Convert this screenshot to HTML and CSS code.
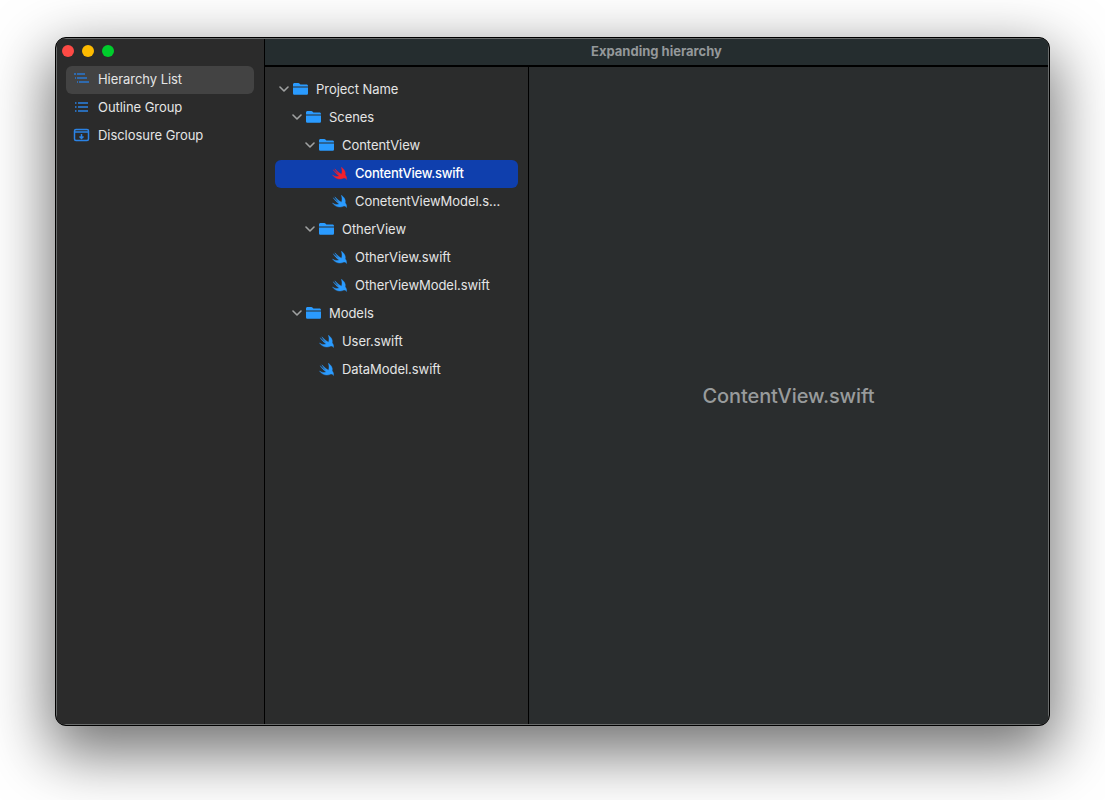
FILE: index.html
```html
<!DOCTYPE html>
<html>
<head lang="en">
    <meta charset="UTF-8">
    <title>Expanding hierarchy</title>
    <link rel="stylesheet" href="styles.css">
</head>
<body>
<svg class="defs" width="0" height="0">
    <symbol id="folder" viewBox="0 0 15 12">
        <path d="M1.6 0h3.6c.7 0 1 .2 1.5.7l.7.8h6c1 0 1.6.6 1.6 1.6v.5H0V1.6C0 .6.6 0 1.6 0z"/>
        <path d="M0 4.4h15v5.8c0 1-.6 1.6-1.6 1.6H1.600C.6 11.800 0 11.200 0 10.200z"/>
    </symbol>
    <symbol id="swift" viewBox="0 0 15 13">
        <path d="M9.4.2c3 2 4.500 5 3.800 7.600 1.200 1.500 1.600 3.200 1.300 4.700-.9-1.400-2.300-1.600-3.300-1.200-3 1.400-7.700 1-10.700-3.300 2.500 1.600 5 1.900 6.800 1.100C5 7.700 2.800 5.200 1.200 2.800c2 2 4.200 3.600 5.800 4.600C5.400 5.800 3.900 3.700 2.900 1.800c2 2.200 4.600 4.400 6.600 5.500.7-2 .7-4.500-.1-7.100z"/>
    </symbol>
    <symbol id="chevron" viewBox="0 0 10 6">
        <path d="M1 1l4 4 4-4" fill="none" stroke="#a0a2a2" stroke-width="1.6" stroke-linecap="round" stroke-linejoin="round"/>
    </symbol>
</svg>
<div class="window">
    <aside class="sidebar">
        <div class="lights">
            <span class="light red"></span>
            <span class="light yellow"></span>
            <span class="light green"></span>
        </div>
        <ul class="nav">
            <li class="nav-item active">
                <svg class="nav-icon" viewBox="0 0 18 14">
                    <path d="M1 2h2M4 2h8M2 6h1M4 6h10M4 10h1M6 10h10"/>
                </svg>
                <span class="label">Hierarchy List</span>
            </li>
            <li class="nav-item">
                <svg class="nav-icon bright" viewBox="0 0 18 14">
                    <path d="M2 3h1.500M5 3h10M2 7h1.500M5 7h10M2 11h1.500M5 11h10"/>
                </svg>
                <span class="label">Outline Group</span>
            </li>
            <li class="nav-item">
                <svg class="nav-icon bright" viewBox="0 0 18 14">
                    <rect x="1.500" y="1.500" width="14" height="11" rx="1.500"/>
                    <path d="M1.500 4h14M8.500 6v4.500M6.500 8.500l2 2 2-2"/>
                </svg>
                <span class="label">Disclosure Group</span>
            </li>
        </ul>
    </aside>
    <div class="main">
        <header class="titlebar">Expanding hierarchy</header>
        <div class="split">
            <ul class="tree">
                <li class="row lv0"><svg class="chevron"><use href="#chevron"/></svg><svg class="folder"><use href="#folder"/></svg><span class="name">Project Name</span></li>
                <li class="row lv1"><svg class="chevron"><use href="#chevron"/></svg><svg class="folder"><use href="#folder"/></svg><span class="name">Scenes</span></li>
                <li class="row lv2"><svg class="chevron"><use href="#chevron"/></svg><svg class="folder"><use href="#folder"/></svg><span class="name">ContentView</span></li>
                <li class="row lv3 selected"><svg class="swift"><use href="#swift"/></svg><span class="name">ContentView.swift</span></li>
                <li class="row lv3"><svg class="swift"><use href="#swift"/></svg><span class="name">ConetentViewModel.s...</span></li>
                <li class="row lv2"><svg class="chevron"><use href="#chevron"/></svg><svg class="folder"><use href="#folder"/></svg><span class="name">OtherView</span></li>
                <li class="row lv3"><svg class="swift"><use href="#swift"/></svg><span class="name">OtherView.swift</span></li>
                <li class="row lv3"><svg class="swift"><use href="#swift"/></svg><span class="name">OtherViewModel.swift</span></li>
                <li class="row lv1"><svg class="chevron"><use href="#chevron"/></svg><svg class="folder"><use href="#folder"/></svg><span class="name">Models</span></li>
                <li class="row lv2"><svg class="swift"><use href="#swift"/></svg><span class="name">User.swift</span></li>
                <li class="row lv2"><svg class="swift"><use href="#swift"/></svg><span class="name">DataModel.swift</span></li>
            </ul>
            <div class="detail">ContentView.swift</div>
        </div>
    </div>
</div>
</body>
</html>
```

FILE: styles.css
```css
*{padding:0;margin:0;box-sizing:border-box;}
html,body{height:100%;}
body{background:#fff;padding:37px 55px 74px 55px;overflow:hidden;font-family:"Inter","Liberation Sans",sans-serif;font-size:13px;color:#e4e5e5;}
ul{list-style:none;}
.defs{display:block;height:0;}

.window{display:flex;height:689px;width:995px;background:#2a2c2c;border:1px solid #000;border-radius:11px;overflow:hidden;box-shadow:0 22px 60px 6px rgba(0,0,0,.55),inset 0 0 0 1px #6a6c6c;}

/* sidebar */
.sidebar{width:208px;flex:none;background:#2b2b2b;border-right:1px solid #000;margin:1px 0 1px 1px;}
.lights{display:flex;gap:8px;height:27px;padding:6px 0 0 5px;}
.light{width:12px;height:12px;border-radius:50%;}
.light.red{background:#fe4a45;}
.light.yellow{background:#febb00;}
.light.green{background:#00cd2c;}
.nav{padding:0 10px 0 9px;}
.nav-item{display:flex;align-items:center;height:28px;padding-left:7px;border-radius:6px;}
.nav-item.active{background:#434343;}
.nav-icon{width:18px;height:14px;margin:0 7px 2px 0;fill:none;stroke:#2a78d2;stroke-width:1.5;}
.nav-icon.bright{stroke:#2b82e4;}
.label{padding-bottom:2px;letter-spacing:-.05px;}

/* title bar */
.main{flex:1;display:flex;flex-direction:column;min-width:0;margin:1px 1px 1px 0;}
.titlebar{height:28px;flex:none;background:#252d2f;border-bottom:2px solid #000;text-align:center;line-height:25px;font-weight:700;font-size:13px;color:#94989a;}
.split{flex:1;display:flex;min-height:0;}

/* tree */
.tree{width:264px;flex:none;background:#2b2c2c;border-right:1px solid #000;padding:9px 10px 0 10px;}
.row{display:flex;align-items:center;height:28px;border-radius:6px;}
.row.lv0{padding-left:4px;}
.row.lv1{padding-left:17px;}
.row.lv2{padding-left:30px;}
.row.lv3{padding-left:43px;}
.row.selected{background:#0f3fad;color:#fff;font-weight:500;letter-spacing:-.25px;}
.chevron{width:10px;height:6px;margin:0 4px 2px 0;flex:none;}
.folder{width:15px;height:12px;margin:0 8px 2px 0;flex:none;fill:#2a9bff;}
.swift{width:15px;height:13px;margin:0 8px 2px 14px;flex:none;fill:#2a9bff;stroke:#2a9bff;stroke-width:.4;}
.selected .swift{fill:#f5202c;stroke:#f5202c;}
.name{padding-bottom:2px;white-space:nowrap;letter-spacing:-.05px;}
.selected .name{letter-spacing:-.25px;}

/* detail */
.detail{flex:1;display:flex;align-items:center;justify-content:center;padding-top:1px;background:#2a2d2e;font-size:20px;font-weight:500;letter-spacing:-.1px;color:#989b9c;}
```
